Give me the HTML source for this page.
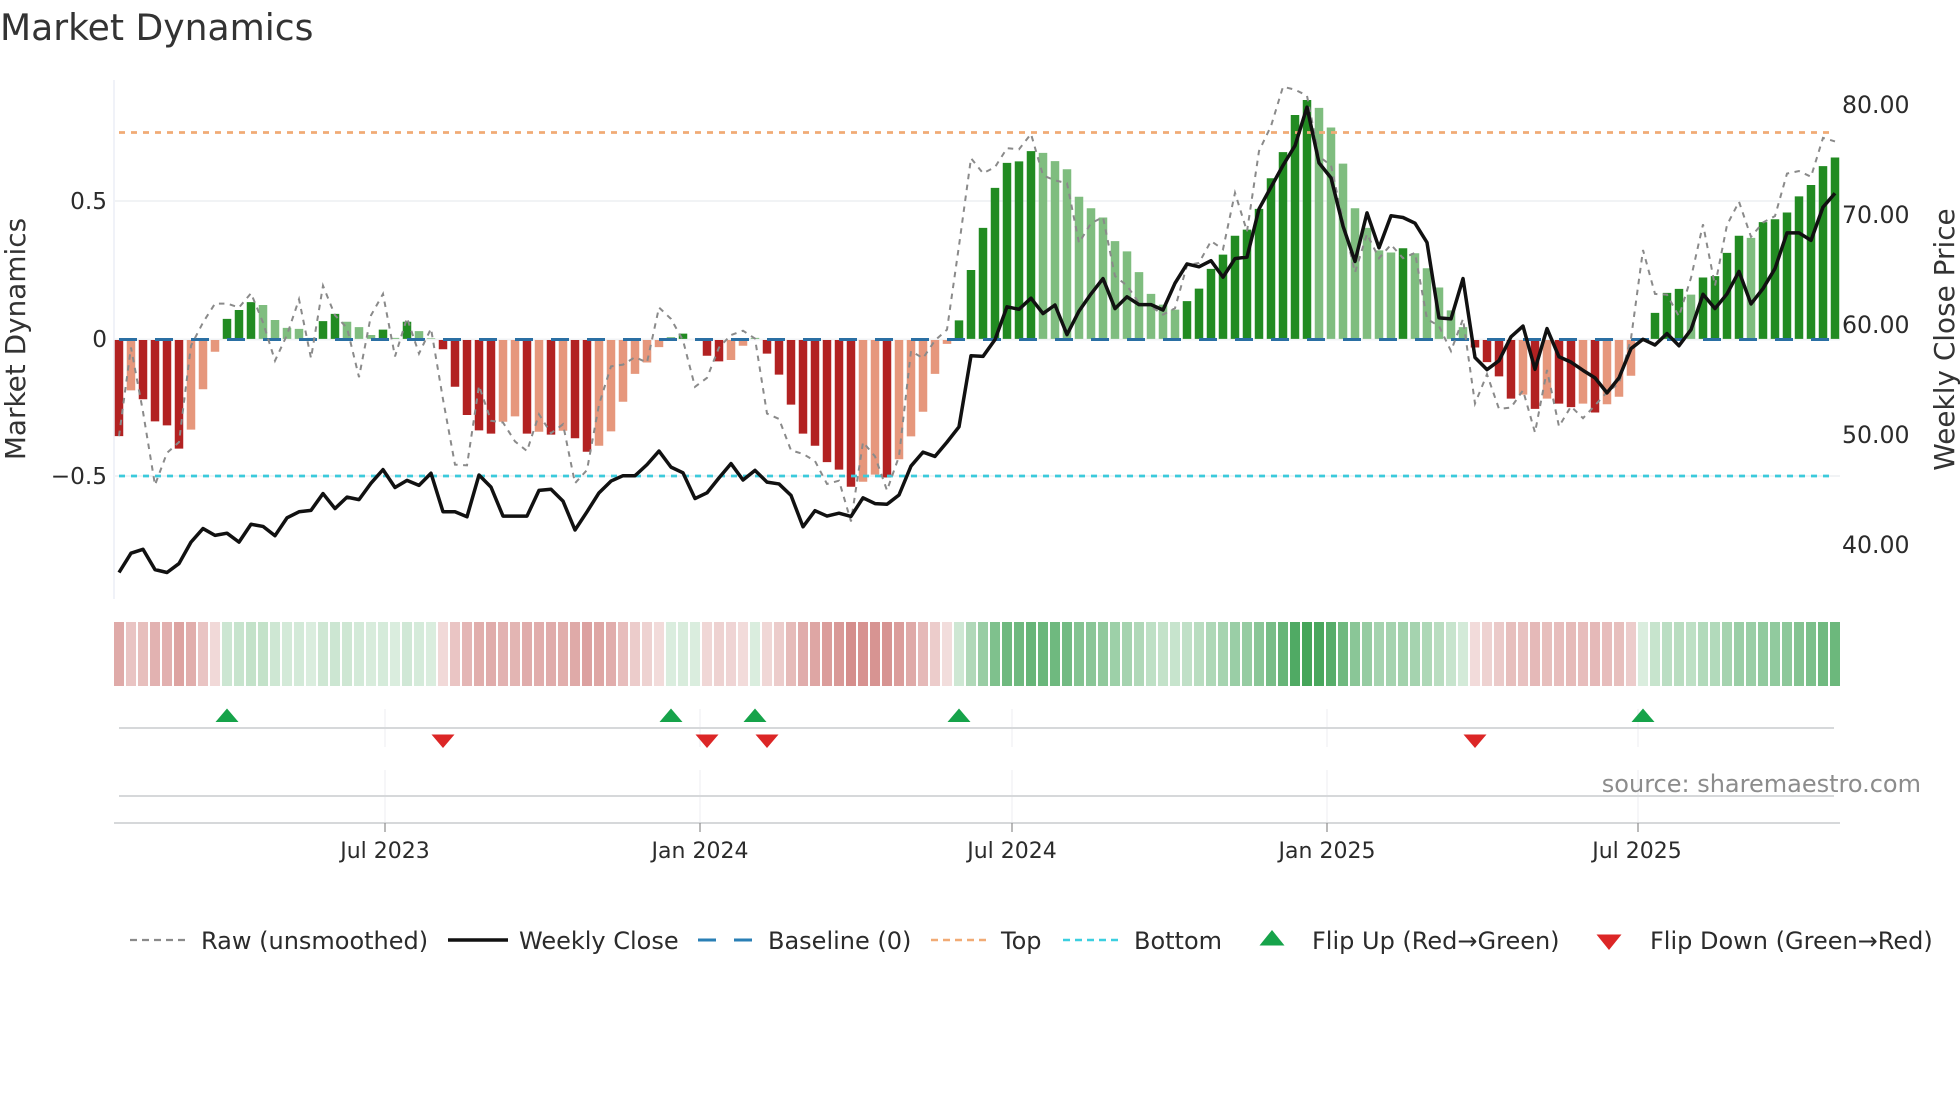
<!DOCTYPE html>
<html><head><meta charset="utf-8"><title>Market Dynamics</title>
<style>
html,body{margin:0;padding:0;background:#fff;width:1960px;height:1102px;overflow:hidden}
svg{display:block;position:absolute;left:0;top:0}
text{font-family:"DejaVu Sans","Liberation Sans",sans-serif;fill:#2b2b2b}
.l{vector-effect:non-scaling-stroke;fill:none}
.t{font-size:22px}.g{font-size:24px}.a{font-size:27.9px;fill:#333}
</style></head><body>
<svg width="1960" height="1102" viewBox="0 0 1960 1102" xmlns="http://www.w3.org/2000/svg">
<!-- grid -->
<g fill="none" stroke="#f1f3f5" stroke-width="2">
<path d="M114 201H1840M114 339.5H1840M114 476H1840"/>
<path d="M114 80V599" stroke="#f0f2f8"/>
</g>
<!-- bars -->
<g transform="translate(0 60) scale(1 .35714)" fill="none" stroke-width="8.5">
<path stroke="#b22222" d="M119 784V1053M143 784V950M155 784V1012M167 784V1023M179 784V1088M443 784V810M455 784V915M467 784V994M479 784V1037M491 784V1046M527 784V1046M551 784V1049M575 784V1059M587 784V1097M707 784V828M719 784V844M767 784V822M779 784V881M791 784V965M803 784V1046M815 784V1080M827 784V1126M839 784V1147M851 784V1195M887 784V1169M1475 784V805M1487 784V846M1499 784V886M1511 784V948M1535 784V977M1559 784V962M1571 784V972M1595 784V987"/>
<path stroke="#e6977c" d="M131 784V925M191 784V1035M203 784V922M215 784V817M503 784V1013M515 784V998M539 784V1041M563 784V1038M599 784V1080M611 784V1040M623 784V957M635 784V879M647 784V847M659 784V804M731 784V840M743 784V800M863 784V1181M875 784V1161M899 784V1118M911 784V1054M923 784V985M935 784V879M947 784V795M1523 784V937M1547 784V948M1583 784V962M1607 784V964M1619 784V943M1631 784V884"/>
<path stroke="#228b22" d="M227 781V725M239 781V700M251 781V678M323 781V731M335 781V711M383 781V755M407 781V733M683 781V766M959 781V729M971 781V588M983 781V470M995 781V358M1007 781V288M1019 781V284M1031 781V255M1187 781V675M1199 781V640M1211 781V585M1223 781V545M1235 781V492M1247 781V475M1259 781V417M1271 781V331M1283 781V258M1295 781V154M1307 781V112M1403 781V527M1655 781V708M1667 781V652M1679 781V641M1703 781V609M1715 781V605M1727 781V540M1739 781V492M1763 781V454M1775 781V446M1787 781V427M1799 781V382M1811 781V350M1823 781V297M1835 781V273"/>
<path stroke="#7fbd7f" d="M263 781V686M275 781V728M287 781V750M299 781V753M311 781V778M347 781V733M359 781V748M371 781V770M395 781V778M419 781V759M431 781V779M671 781V776M755 781V778M1043 781V260M1055 781V283M1067 781V306M1079 781V383M1091 781V415M1103 781V441M1115 781V507M1127 781V536M1139 781V594M1151 781V655M1163 781V685M1175 781V699M1319 781V134M1331 781V189M1343 781V290M1355 781V415M1367 781V470M1379 781V533M1391 781V539M1415 781V541M1427 781V583M1439 781V637M1451 781V701M1463 781V748M1691 781V657M1751 781V498"/>
</g>
<!-- threshold lines -->
<g fill="none" stroke-width="2.7">
<path d="M119 132.5H1830" stroke="#f1ab75" stroke-dasharray="6 6"/>
<path d="M119 476H1830" stroke="#3ccadb" stroke-dasharray="6 6"/>
<path d="M119 339.5H1835" stroke="#2a6fa3" stroke-dasharray="18 18" stroke-width="3"/>
</g>
<!-- raw and close -->
<g transform="translate(0 60) scale(1 .35714)">
<polyline class="l" stroke="#8a8a8a" stroke-width="2" stroke-dasharray="5.5 5.5" points="119,1053 131,805 143,985 155,1190 167,1100 179,1070 191,800 203,735 215,682 227,682 239,693 251,653 263,735 275,842 287,770 299,670 311,835 323,632 335,715 347,750 359,888 371,715 383,655 395,830 407,722 419,822 431,752 443,950 455,1133 467,1135 479,912 491,1010 503,1015 515,1068 527,1095 539,992 551,1045 563,1020 575,1185 587,1148 599,965 611,858 623,853 635,832 647,847 659,693 671,725 683,785 695,915 707,890 719,805 731,770 743,758 755,780 767,990 779,1005 791,1093 803,1103 815,1123 827,1187 839,1178 851,1292 863,1070 875,1110 887,1205 899,1110 911,815 923,835 935,785 947,755 959,520 971,275 983,317 995,300 1007,247 1019,250 1031,207 1043,323 1055,337 1067,345 1079,512 1091,457 1103,440 1115,605 1127,632 1139,680 1151,690 1163,713 1175,695 1187,575 1199,568 1211,507 1223,530 1235,372 1247,480 1259,255 1271,185 1283,75 1295,83 1307,100 1319,270 1331,295 1343,450 1355,595 1367,487 1379,555 1391,517 1403,555 1415,540 1427,725 1439,745 1451,815 1463,725 1475,962 1487,880 1499,977 1511,973 1523,925 1535,1043 1547,868 1559,1026 1571,970 1583,1003 1595,967 1607,930 1619,905 1631,780 1643,532 1655,655 1667,657 1679,718 1691,610 1703,460 1715,632 1727,462 1739,397 1751,495 1763,455 1775,437 1787,318 1799,311 1811,327 1823,218 1835,228"/>
<polyline class="l" stroke="#111" stroke-width="3.5" stroke-linejoin="round" points="119,1435 131,1381 143,1370 155,1427 167,1435 179,1410 191,1350 203,1312 215,1331 227,1325 239,1350 251,1300 263,1306 275,1332 287,1282 299,1265 311,1261 323,1214 335,1256 347,1224 359,1231 371,1185 383,1147 395,1197 407,1177 419,1191 431,1157 443,1265 455,1265 467,1279 479,1162 491,1196 503,1277 515,1277 527,1277 539,1205 551,1202 563,1235 575,1316 587,1265 599,1212 611,1179 623,1164 635,1164 647,1133 659,1095 671,1140 683,1156 695,1228 707,1212 719,1170 731,1130 743,1176 755,1149 767,1182 779,1187 791,1219 803,1307 815,1262 827,1277 839,1269 851,1278 863,1226 875,1242 887,1244 899,1218 911,1137 923,1098 935,1110 947,1070 959,1027 971,828 983,830 995,783 1007,691 1019,698 1031,667 1043,710 1055,686 1067,769 1079,703 1091,655 1103,612 1115,696 1127,663 1139,685 1151,685 1163,700 1175,625 1187,571 1199,579 1211,562 1223,608 1235,556 1247,552 1259,417 1271,356 1283,295 1295,240 1307,132 1319,288 1331,330 1343,465 1355,564 1367,428 1379,526 1391,436 1403,441 1415,457 1427,511 1439,722 1451,725 1463,612 1475,833 1487,867 1499,842 1511,775 1523,745 1535,866 1547,752 1559,831 1571,846 1583,869 1595,890 1607,932 1619,890 1631,808 1643,782 1655,798 1667,766 1679,800 1691,755 1703,656 1715,696 1727,655 1739,592 1751,683 1763,640 1775,584 1787,484 1799,484 1811,505 1823,412 1835,373"/>
</g>
<!-- heat strip -->
<g transform="translate(0 622)" stroke-width="10" fill="none">
<g stroke="#b02a26">
<path d="M119 0v64" stroke-opacity=".40"/><path d="M131 0v64" stroke-opacity=".28"/><path d="M143 0v64" stroke-opacity=".30"/><path d="M155 0v64" stroke-opacity=".36"/><path d="M167 0v64" stroke-opacity=".37"/><path d="M179 0v64" stroke-opacity=".43"/><path d="M191 0v64" stroke-opacity=".38"/><path d="M203 0v64" stroke-opacity=".28"/><path d="M215 0v64" stroke-opacity=".18"/>
<path d="M443 0v64" stroke-opacity=".18"/><path d="M455 0v64" stroke-opacity=".27"/><path d="M467 0v64" stroke-opacity=".34"/><path d="M479 0v64" stroke-opacity=".38"/><path d="M491 0v64" stroke-opacity=".39"/><path d="M503 0v64" stroke-opacity=".36"/><path d="M515 0v64" stroke-opacity=".35"/><path d="M527 0v64" stroke-opacity=".39"/><path d="M539 0v64" stroke-opacity=".385"/><path d="M551 0v64" stroke-opacity=".39"/><path d="M563 0v64" stroke-opacity=".38"/><path d="M575 0v64" stroke-opacity=".40"/><path d="M587 0v64" stroke-opacity=".44"/><path d="M599 0v64" stroke-opacity=".42"/><path d="M611 0v64" stroke-opacity=".385"/><path d="M623 0v64" stroke-opacity=".31"/><path d="M635 0v64" stroke-opacity=".24"/><path d="M647 0v64" stroke-opacity=".21"/><path d="M659 0v64" stroke-opacity=".17"/>
<path d="M707 0v64" stroke-opacity=".19"/><path d="M719 0v64" stroke-opacity=".21"/><path d="M731 0v64" stroke-opacity=".20"/><path d="M743 0v64" stroke-opacity=".17"/>
<path d="M767 0v64" stroke-opacity=".19"/><path d="M779 0v64" stroke-opacity=".24"/><path d="M791 0v64" stroke-opacity=".32"/><path d="M803 0v64" stroke-opacity=".39"/><path d="M815 0v64" stroke-opacity=".42"/><path d="M827 0v64" stroke-opacity=".46"/><path d="M839 0v64" stroke-opacity=".48"/><path d="M851 0v64" stroke-opacity=".53"/><path d="M863 0v64" stroke-opacity=".51"/><path d="M875 0v64" stroke-opacity=".50"/><path d="M887 0v64" stroke-opacity=".50"/><path d="M899 0v64" stroke-opacity=".46"/><path d="M911 0v64" stroke-opacity=".40"/><path d="M923 0v64" stroke-opacity=".33"/><path d="M935 0v64" stroke-opacity=".24"/><path d="M947 0v64" stroke-opacity=".16"/>
<path d="M1475 0v64" stroke-opacity=".17"/><path d="M1487 0v64" stroke-opacity=".21"/><path d="M1499 0v64" stroke-opacity=".25"/><path d="M1511 0v64" stroke-opacity=".30"/><path d="M1523 0v64" stroke-opacity=".29"/><path d="M1535 0v64" stroke-opacity=".33"/><path d="M1547 0v64" stroke-opacity=".30"/><path d="M1559 0v64" stroke-opacity=".31"/><path d="M1571 0v64" stroke-opacity=".32"/><path d="M1583 0v64" stroke-opacity=".31"/><path d="M1595 0v64" stroke-opacity=".33"/><path d="M1607 0v64" stroke-opacity=".31"/><path d="M1619 0v64" stroke-opacity=".30"/><path d="M1631 0v64" stroke-opacity=".24"/>
</g>
<g stroke="#168e30">
<path d="M227 0v64" stroke-opacity=".22"/><path d="M239 0v64" stroke-opacity=".24"/><path d="M251 0v64" stroke-opacity=".26"/><path d="M263 0v64" stroke-opacity=".26"/><path d="M275 0v64" stroke-opacity=".21"/><path d="M287 0v64" stroke-opacity=".19"/><path d="M299 0v64" stroke-opacity=".19"/><path d="M311 0v64" stroke-opacity=".16"/><path d="M323 0v64" stroke-opacity=".21"/><path d="M335 0v64" stroke-opacity=".22"/><path d="M347 0v64" stroke-opacity=".21"/><path d="M359 0v64" stroke-opacity=".19"/><path d="M371 0v64" stroke-opacity=".17"/><path d="M383 0v64" stroke-opacity=".18"/><path d="M395 0v64" stroke-opacity=".16"/><path d="M407 0v64" stroke-opacity=".20"/><path d="M419 0v64" stroke-opacity=".18"/><path d="M431 0v64" stroke-opacity=".16"/>
<path d="M671 0v64" stroke-opacity=".16"/><path d="M683 0v64" stroke-opacity=".17"/><path d="M695 0v64" stroke-opacity=".16"/><path d="M755 0v64" stroke-opacity=".16"/>
<path d="M959 0v64" stroke-opacity=".21"/><path d="M971 0v64" stroke-opacity=".34"/><path d="M983 0v64" stroke-opacity=".44"/><path d="M995 0v64" stroke-opacity=".55"/><path d="M1007 0v64" stroke-opacity=".62"/><path d="M1019 0v64" stroke-opacity=".62"/><path d="M1031 0v64" stroke-opacity=".65"/><path d="M1043 0v64" stroke-opacity=".64"/><path d="M1055 0v64" stroke-opacity=".62"/><path d="M1067 0v64" stroke-opacity=".60"/><path d="M1079 0v64" stroke-opacity=".53"/><path d="M1091 0v64" stroke-opacity=".50"/><path d="M1103 0v64" stroke-opacity=".48"/><path d="M1115 0v64" stroke-opacity=".42"/><path d="M1127 0v64" stroke-opacity=".39"/><path d="M1139 0v64" stroke-opacity=".34"/><path d="M1151 0v64" stroke-opacity=".28"/><path d="M1163 0v64" stroke-opacity=".26"/><path d="M1175 0v64" stroke-opacity=".24"/><path d="M1187 0v64" stroke-opacity=".27"/><path d="M1199 0v64" stroke-opacity=".30"/><path d="M1211 0v64" stroke-opacity=".35"/><path d="M1223 0v64" stroke-opacity=".38"/><path d="M1235 0v64" stroke-opacity=".43"/><path d="M1247 0v64" stroke-opacity=".45"/><path d="M1259 0v64" stroke-opacity=".50"/><path d="M1271 0v64" stroke-opacity=".58"/><path d="M1283 0v64" stroke-opacity=".65"/><path d="M1295 0v64" stroke-opacity=".75"/><path d="M1307 0v64" stroke-opacity=".80"/><path d="M1319 0v64" stroke-opacity=".78"/><path d="M1331 0v64" stroke-opacity=".72"/><path d="M1343 0v64" stroke-opacity=".62"/><path d="M1355 0v64" stroke-opacity=".50"/><path d="M1367 0v64" stroke-opacity=".45"/><path d="M1379 0v64" stroke-opacity=".39"/><path d="M1391 0v64" stroke-opacity=".39"/><path d="M1403 0v64" stroke-opacity=".40"/><path d="M1415 0v64" stroke-opacity=".39"/><path d="M1427 0v64" stroke-opacity=".35"/><path d="M1439 0v64" stroke-opacity=".30"/><path d="M1451 0v64" stroke-opacity=".24"/><path d="M1463 0v64" stroke-opacity=".19"/>
<path d="M1643 0v64" stroke-opacity=".16"/><path d="M1655 0v64" stroke-opacity=".24"/><path d="M1667 0v64" stroke-opacity=".29"/><path d="M1679 0v64" stroke-opacity=".30"/><path d="M1691 0v64" stroke-opacity=".28"/><path d="M1703 0v64" stroke-opacity=".33"/><path d="M1715 0v64" stroke-opacity=".33"/><path d="M1727 0v64" stroke-opacity=".39"/><path d="M1739 0v64" stroke-opacity=".43"/><path d="M1751 0v64" stroke-opacity=".43"/><path d="M1763 0v64" stroke-opacity=".47"/><path d="M1775 0v64" stroke-opacity=".47"/><path d="M1787 0v64" stroke-opacity=".49"/><path d="M1799 0v64" stroke-opacity=".53"/><path d="M1811 0v64" stroke-opacity=".56"/><path d="M1823 0v64" stroke-opacity=".61"/><path d="M1835 0v64" stroke-opacity=".63"/>
</g>
</g>
<!-- lower panels -->
<g fill="none">
<path stroke="#eff1f4" stroke-width="1.2" d="M385 709V747M700 709V747M1012 709V747M1327 709V747M1638 709V747M385 770V822M700 770V822M1012 770V822M1327 770V822M1638 770V822"/>
<path stroke="#d6d8da" stroke-width="2" d="M119 728H1834M119 796H1834M114 823H1840"/>
<path stroke="#8d8d8d" stroke-width="1.2" d="M385 823V832M700 823V832M1012 823V832M1327 823V832M1638 823V832"/>
</g>
<g fill="#16a34a">
<path d="M227 708.5l11.5 13.5h-23zM671 708.5l11.5 13.5h-23zM755 708.5l11.5 13.5h-23zM959 708.5l11.5 13.5h-23zM1643 708.5l11.5 13.5h-23z"/>
<path d="M1272 930l12.5 15.5h-25z"/>
</g>
<g fill="#dc2626">
<path d="M443 748l-11.5-13.5h23zM707 748l-11.5-13.5h23zM767 748l-11.5-13.5h23zM1475 748l-11.5-13.5h23z"/>
<path d="M1609 950l-12.5-15.5h25z"/>
</g>
<!-- legend samples -->
<g fill="none">
<path d="M130 940H186" stroke="#8a8a8a" stroke-width="2.2" stroke-dasharray="7 5"/>
<path d="M448 940H508" stroke="#111" stroke-width="3.6"/>
<path d="M698 940H716M734 940H752" stroke="#2a7fb5" stroke-width="3"/>
<path d="M931 940H986" stroke="#f1ab75" stroke-width="2.6" stroke-dasharray="7 5"/>
<path d="M1063 940H1118" stroke="#3ccfe0" stroke-width="2.6" stroke-dasharray="7 5"/>
</g>
<!-- text -->
<text x="0" y="40" style="font-size:36.1px;fill:#333">Market Dynamics</text>
<text class="a" transform="translate(25 339) rotate(-90)" text-anchor="middle">Market Dynamics</text>
<text class="a" transform="translate(1954 339.5) rotate(-90)" text-anchor="middle">Weekly Close Price</text>
<g style="font-size:23.2px" text-anchor="end">
<text x="107" y="209">0.5</text>
<text x="107" y="347">0</text>
<text x="107" y="484">−0.5</text>
</g>
<g style="font-size:23.6px">
<text x="1842" y="113">80.00</text>
<text x="1842" y="223">70.00</text>
<text x="1842" y="333">60.00</text>
<text x="1842" y="443">50.00</text>
<text x="1842" y="553">40.00</text>
</g>
<g class="t" text-anchor="middle">
<text x="385" y="858">Jul 2023</text>
<text x="700" y="858">Jan 2024</text>
<text x="1012" y="858">Jul 2024</text>
<text x="1327" y="858">Jan 2025</text>
<text x="1637" y="858">Jul 2025</text>
</g>
<text x="1921" y="792" text-anchor="end" style="font-size:24px;fill:#8c8c8c">source: sharemaestro.com</text>
<g class="g">
<text x="201" y="949">Raw (unsmoothed)</text>
<text x="519" y="949">Weekly Close</text>
<text x="768" y="949">Baseline (0)</text>
<text x="1001" y="949">Top</text>
<text x="1134" y="949">Bottom</text>
<text x="1312" y="949">Flip Up (Red→Green)</text>
<text x="1650" y="949">Flip Down (Green→Red)</text>
</g>
</svg>
</body></html>
